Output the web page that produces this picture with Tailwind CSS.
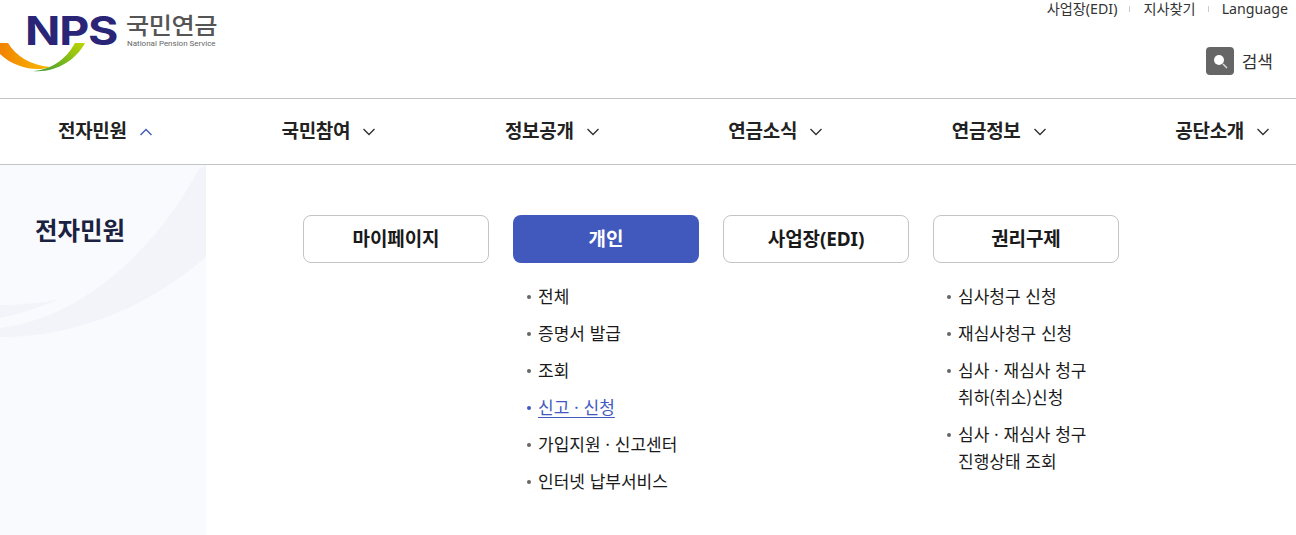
<!DOCTYPE html>
<html lang="ko">

<head>
  <meta charset="UTF-8" />
  <title>국민연금 전자민원</title>
  <script src="https://cdn.jsdelivr.net/npm/@tailwindcss/browser@4"></script>
</head>

<body class="bg-white h-[535px] overflow-hidden font-['Noto_Sans','Noto_Sans_CJK_KR',sans-serif] text-[#1a1a1a]">

  <!-- HEADER -->
  <header class="h-[98px] flex justify-between">
    <a href="#" class="relative block w-[230px] h-[80px]">
      <svg class="absolute left-0 top-0" width="120" height="80" viewBox="0 0 120 80">
        <defs>
          <linearGradient id="swooshOrange" x1="0" y1="0" x2="1" y2="0">
            <stop offset="0" stop-color="#f08300" />
            <stop offset="1" stop-color="#fbb900" />
          </linearGradient>
          <linearGradient id="swooshGreen" x1="0" y1="1" x2="1" y2="0">
            <stop offset="0" stop-color="#3f9c35" />
            <stop offset="1" stop-color="#bdd600" />
          </linearGradient>
        </defs>
        <path d="M0 43 L8 43 C16 56 30 65 50 67 C38 72 14 68 0 54 Z" fill="url(#swooshOrange)" />
        <path d="M33 71 C50 70 66 60 75 43 L85 43 C76 60 56 73 33 71 Z" fill="url(#swooshGreen)" />
      </svg>
      <span class="absolute left-[25px] top-[5px] origin-left scale-x-[1.16] text-[40px] leading-[52px] font-bold tracking-[-1px] text-[#2a2576] font-['Inter',sans-serif]">NPS</span>
      <span class="absolute left-[126px] top-[13px] origin-left scale-x-[1.1] text-[23px] leading-[24px] font-medium tracking-[-0.5px] text-[#555]">국민연금</span>
      <span class="absolute left-[127px] top-[38px] text-[8px] leading-[11px] text-[#666] font-['Roboto',sans-serif]">National Pension Service</span>
    </a>
    <div class="flex flex-col items-end pr-[8px]">
      <ul class="flex items-center h-[18px] text-[14.2px] text-[#333]">
        <li><a href="#">사업장(EDI)</a></li>
        <li class="w-px h-[6px] bg-[#ccc] ml-[12px] mr-[13px]"></li>
        <li><a href="#">지사찾기</a></li>
        <li class="w-px h-[6px] bg-[#ccc] ml-[12px] mr-[13px]"></li>
        <li><a href="#">Language</a></li>
      </ul>
      <button class="flex items-center mt-[29px] mr-[15px] text-[17px] text-[#333]">
        <span class="w-[28px] h-[28px] rounded-[4px] bg-[#666] flex items-center justify-center mr-[8px]">
          <svg width="18" height="18" viewBox="0 0 18 18" fill="none">
            <circle cx="8" cy="8" r="5" fill="#fff" />
            <path d="M12 12 L16 16" stroke="#ddd" stroke-width="1.5" />
          </svg>
        </span>
        <span class="mt-[2px]">검색</span>
      </button>
    </div>
  </header>

  <!-- MAIN NAV -->
  <nav class="h-[67px] border-y border-[#c4c4c4] flex items-center justify-between pl-[58px] pr-[26px] text-[19px] font-bold tracking-[-0.3px] text-[#222]">
    <a href="#" class="flex items-center gap-[12px]">전자민원
      <svg width="14" height="8" viewBox="0 0 14 8" fill="none"><path d="M1.5 7 L7 1.5 L12.5 7" stroke="#4159bd" stroke-width="1.4" /></svg>
    </a>
    <a href="#" class="flex items-center gap-[12px]">국민참여
      <svg width="14" height="8" viewBox="0 0 14 8" fill="none"><path d="M1.5 1 L7 6.5 L12.5 1" stroke="#333" stroke-width="1.4" /></svg>
    </a>
    <a href="#" class="flex items-center gap-[12px]">정보공개
      <svg width="14" height="8" viewBox="0 0 14 8" fill="none"><path d="M1.5 1 L7 6.5 L12.5 1" stroke="#333" stroke-width="1.4" /></svg>
    </a>
    <a href="#" class="flex items-center gap-[12px]">연금소식
      <svg width="14" height="8" viewBox="0 0 14 8" fill="none"><path d="M1.5 1 L7 6.5 L12.5 1" stroke="#333" stroke-width="1.4" /></svg>
    </a>
    <a href="#" class="flex items-center gap-[12px]">연금정보
      <svg width="14" height="8" viewBox="0 0 14 8" fill="none"><path d="M1.5 1 L7 6.5 L12.5 1" stroke="#333" stroke-width="1.4" /></svg>
    </a>
    <a href="#" class="flex items-center gap-[12px]">공단소개
      <svg width="14" height="8" viewBox="0 0 14 8" fill="none"><path d="M1.5 1 L7 6.5 L12.5 1" stroke="#333" stroke-width="1.4" /></svg>
    </a>
  </nav>

  <div class="flex h-[370px]">
    <!-- SIDE TITLE -->
    <aside class="relative w-[206px] shrink-0 bg-[#f9fafd] pl-[35px] pt-[48px]">
      <svg class="absolute left-0 top-0" width="206" height="370" viewBox="0 0 206 370">
        <path d="M206 0 L198 5 C170 60 100 150 0 163 L0 172 C80 172 150 140 206 92 Z" fill="#f3f4fa" />
        <path d="M0 140 C20 140 40 138 60 134 C40 142 20 149 0 153 Z" fill="#f3f4fa" />
      </svg>
      <h2 class="relative text-[24.5px] leading-[36px] font-bold text-[#1b2140]">전자민원</h2>
    </aside>

    <!-- MENU COLUMNS -->
    <div class="grid grid-cols-[186px_186px_186px_186px] gap-x-[24px] pl-[97px] pt-[50px] items-start">
      <div>
        <a href="#" class="flex items-center justify-center h-[48px] rounded-[8px] border border-[#c4c4c4] text-[19px] tracking-[-0.1px] font-bold">마이페이지</a>
      </div>
      <div>
        <a href="#" class="flex items-center justify-center h-[48px] rounded-[8px] bg-[#4159bd] text-white text-[19px] tracking-[-0.1px] font-bold">개인</a>
        <ul class="mt-[19px] pl-[14px] font-['Noto_Sans_CJK_KR',sans-serif] text-[17px] leading-[27px] space-y-[10px]">
          <li class="flex items-start"><span class="w-[4px] h-[4px] mt-[13px] mr-[7px] rounded-full shrink-0 bg-[#666]"></span><a href="#">전체</a></li>
          <li class="flex items-start"><span class="w-[4px] h-[4px] mt-[13px] mr-[7px] rounded-full shrink-0 bg-[#666]"></span><a href="#">증명서 발급</a></li>
          <li class="flex items-start"><span class="w-[4px] h-[4px] mt-[13px] mr-[7px] rounded-full shrink-0 bg-[#666]"></span><a href="#">조회</a></li>
          <li class="flex items-start text-[#4159bd]"><span class="w-[4px] h-[4px] mt-[13px] mr-[7px] rounded-full shrink-0 bg-[#4159bd]"></span><a href="#" class="underline underline-offset-[3px]">신고 · 신청</a></li>
          <li class="flex items-start"><span class="w-[4px] h-[4px] mt-[13px] mr-[7px] rounded-full shrink-0 bg-[#666]"></span><a href="#">가입지원 · 신고센터</a></li>
          <li class="flex items-start"><span class="w-[4px] h-[4px] mt-[13px] mr-[7px] rounded-full shrink-0 bg-[#666]"></span><a href="#">인터넷 납부서비스</a></li>
        </ul>
      </div>
      <div>
        <a href="#" class="flex items-center justify-center h-[48px] rounded-[8px] border border-[#c4c4c4] text-[19px] tracking-[-0.1px] font-bold">사업장(EDI)</a>
      </div>
      <div>
        <a href="#" class="flex items-center justify-center h-[48px] rounded-[8px] border border-[#c4c4c4] text-[19px] tracking-[-0.1px] font-bold">권리구제</a>
        <ul class="mt-[19px] pl-[14px] font-['Noto_Sans_CJK_KR',sans-serif] text-[17px] leading-[27px] space-y-[10px]">
          <li class="flex items-start"><span class="w-[4px] h-[4px] mt-[13px] mr-[7px] rounded-full shrink-0 bg-[#666]"></span><a href="#">심사청구 신청</a></li>
          <li class="flex items-start"><span class="w-[4px] h-[4px] mt-[13px] mr-[7px] rounded-full shrink-0 bg-[#666]"></span><a href="#">재심사청구 신청</a></li>
          <li class="flex items-start"><span class="w-[4px] h-[4px] mt-[13px] mr-[7px] rounded-full shrink-0 bg-[#666]"></span><a href="#">심사 · 재심사 청구<br />취하(취소)신청</a></li>
          <li class="flex items-start"><span class="w-[4px] h-[4px] mt-[13px] mr-[7px] rounded-full shrink-0 bg-[#666]"></span><a href="#">심사 · 재심사 청구<br />진행상태 조회</a></li>
        </ul>
      </div>
    </div>
  </div>

</body>

</html>
